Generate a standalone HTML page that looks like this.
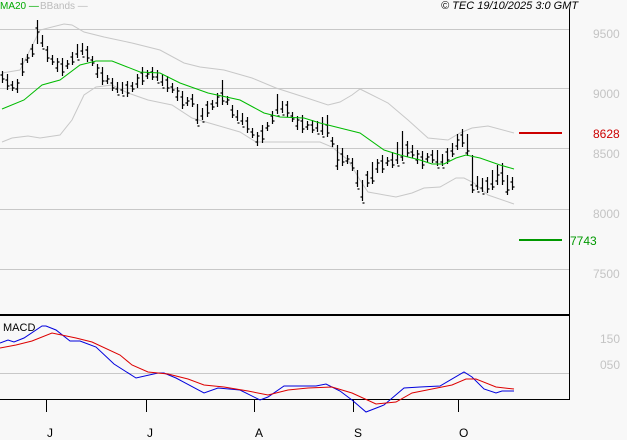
<!DOCTYPE html>
<html><head><meta charset="utf-8"><style>
html,body{margin:0;padding:0;background:#f8f8f8;width:627px;height:440px;overflow:hidden}
svg{display:block}
text{font-family:"Liberation Sans",sans-serif}
</style></head><body>
<svg width="627" height="440" viewBox="0 0 627 440" xmlns="http://www.w3.org/2000/svg">
<rect width="627" height="440" fill="#f8f8f8"/>
<g stroke="#c8c8c8" stroke-width="1">
<line x1="0" y1="29.5" x2="569" y2="29.5"/>
<line x1="0" y1="88.5" x2="569" y2="88.5"/>
<line x1="0" y1="148.5" x2="569" y2="148.5"/>
<line x1="0" y1="209.5" x2="569" y2="209.5"/>
<line x1="0" y1="269.5" x2="569" y2="269.5"/>
<line x1="0" y1="373.5" x2="569" y2="373.5"/>
</g>
<g fill="#c4c4c4" font-size="12">
<text x="593" y="38">9500</text>
<text x="593" y="98">9000</text>
<text x="593" y="158">8500</text>
<text x="593" y="218">8000</text>
<text x="593" y="278">7500</text>
<text x="600" y="343">150</text>
<text x="600" y="369">050</text>
</g>
<polyline fill="none" stroke="#c8c8c8" stroke-width="1" points="2,73 20,70 40,30 64,24 72,25 84,32 104,37 132,43 160,50 184,63 200,67 224,70 252,78 276,88 304,97 328,105 340,102 352,95 360,89 368,93 388,103 408,120 428,138 448,140 460,133 472,128 488,126 514,133"/>
<polyline fill="none" stroke="#c8c8c8" stroke-width="1" points="2,142 12,138 28,136 40,138 60,135 72,120 84,95 96,87 112,85 128,93 148,100 172,105 192,118 216,125 240,132 256,142 280,142 320,142 332,147 348,160 360,180 368,192 396,197 412,193 424,188 440,187 456,178 464,178 474,183 488,195 514,204"/>
<path stroke="#000" stroke-width="1.2" fill="none" d="
M2.5 71v12m-2-8h2m0 4h2
M7.5 74v16m-2-10h2m0 6h2
M12.5 81v10m-2-6h2m0 3h2
M17.5 79v14m-2-4h2m0-6h2
M22.5 58v18m-2-12h2m0 8h2
M27.5 54v9m-2-3h2m0-2h2
M32.5 44v13m-2-8h2m0 5h2
M37.5 20v24m-2-16h2m0 4h2
M42.5 35v12m-2-4h2m0 6h2
M47.5 46v16m-2-12h2m0 8h2
M52.5 55v10m-2-6h2m0 3h2
M57.5 58v14m-2-4h2m0-6h2
M62.5 58v18m-2-12h2m0 8h2
M67.5 60v9m-2-3h2m0-2h2
M72.5 52v13m-2-8h2m0 5h2
M77.5 44v14m-2-4h2m0 6h2
M82.5 43v12m-2-4h2m0 6h2
M87.5 46v16m-2-12h2m0 8h2
M92.5 56v10m-2-6h2m0 3h2
M97.5 64v14m-2-4h2m0-6h2
M102.5 67v18m-2-12h2m0 8h2
M107.5 75v9m-2-3h2m0-2h2
M112.5 78v13m-2-8h2m0 5h2
M117.5 82v11m-2-4h2m0 6h2
M122.5 82v12m-2-4h2m0 6h2
M127.5 81v16m-2-12h2m0 8h2
M132.5 82v10m-2-6h2m0 3h2
M137.5 74v14m-2-4h2m0-6h2
M142.5 67v18m-2-12h2m0 8h2
M147.5 70v9m-2-3h2m0-2h2
M152.5 67v13m-2-8h2m0 5h2
M157.5 70v11m-2-4h2m0 6h2
M162.5 74v12m-2-4h2m0 6h2
M167.5 76v16m-2-12h2m0 8h2
M172.5 83v10m-2-6h2m0 3h2
M177.5 87v14m-2-4h2m0-6h2
M182.5 91v18m-2-12h2m0 8h2
M187.5 97v9m-2-3h2m0-2h2
M192.5 94v13m-2-8h2m0 5h2
M197.5 104v20m-2-4h2m0 6h2
M202.5 108v12m-2-4h2m0 6h2
M207.5 101v16m-2-12h2m0 8h2
M212.5 100v10m-2-6h2m0 3h2
M217.5 93v14m-2-4h2m0-6h2
M222.5 80v25m-2-12h2m0 8h2
M227.5 96v9m-2-3h2m0-2h2
M232.5 105v13m-2-8h2m0 5h2
M237.5 110v11m-2-4h2m0 6h2
M242.5 113v12m-2-4h2m0 6h2
M247.5 117v16m-2-12h2m0 8h2
M252.5 128v10m-2-6h2m0 3h2
M257.5 132v14m-2-4h2m0-6h2
M262.5 125v18m-2-12h2m0 8h2
M267.5 122v9m-2-3h2m0-2h2
M272.5 111v13m-2-8h2m0 5h2
M277.5 94v20m-2-4h2m0 6h2
M282.5 101v12m-2-4h2m0 6h2
M287.5 101v16m-2-12h2m0 8h2
M292.5 112v10m-2-6h2m0 3h2
M297.5 116v14m-2-4h2m0-6h2
M302.5 115v18m-2-12h2m0 8h2
M307.5 121v9m-2-3h2m0-2h2
M312.5 120v13m-2-8h2m0 5h2
M317.5 121v11m-2-4h2m0 6h2
M322.5 117v18m-2-4h2m0 6h2
M327.5 115v22m-2-12h2m0 8h2
M332.5 137v10m-2-6h2m0 3h2
M337.5 145v25m-2-4h2m0-6h2
M342.5 148v18m-2-12h2m0 8h2
M347.5 155v9m-2-3h2m0-2h2
M352.5 158v13m-2-8h2m0 5h2
M357.5 170v17m-2-4h2m0 6h2
M362.5 180v21m-2-4h2m0 6h2
M367.5 171v16m-2-12h2m0 8h2
M372.5 162v22m-2-6h2m0 3h2
M377.5 159v14m-2-4h2m0-6h2
M382.5 155v18m-2-12h2m0 8h2
M387.5 157v9m-2-3h2m0-2h2
M392.5 152v16m-2-8h2m0 5h2
M397.5 142v22m-2-4h2m0 6h2
M402.5 131v30m-2-4h2m0 6h2
M407.5 141v16m-2-12h2m0 8h2
M412.5 145v13m-2-6h2m0 3h2
M417.5 150v14m-2-4h2m0-6h2
M422.5 151v18m-2-12h2m0 8h2
M427.5 153v9m-2-3h2m0-2h2
M432.5 150v13m-2-8h2m0 5h2
M437.5 150v16m-2-4h2m0 6h2
M442.5 154v12m-2-4h2m0 6h2
M447.5 148v16m-2-12h2m0 8h2
M452.5 143v14m-2-6h2m0 3h2
M457.5 134v16m-2-4h2m0-6h2
M462.5 129v18m-2-12h2m0 8h2
M467.5 134v22m-2-3h2m0-2h2
M472.5 155v38m-2-8h2m0 5h2
M477.5 176v14m-2-4h2m0 6h2
M482.5 178v14m-2-4h2m0 6h2
M487.5 177v16m-2-12h2m0 8h2
M492.5 170v20m-2-6h2m0 3h2
M497.5 165v20m-2-4h2m0-6h2
M502.5 163v22m-2-12h2m0 8h2
M507.5 175v20m-2-3h2m0-2h2
M512.5 177v13m-2-8h2m0 5h2"/>
<polyline fill="none" stroke="#00bb00" stroke-width="1" points="2,109 24,100 42,85 60,80 80,65 96,61 112,61 140,72 160,73 180,83 208,93 240,100 264,113 280,117 304,118 320,123 336,127 360,133 384,150 400,155 420,160 432,164 444,164 456,158 466,155 480,158 500,165 514,169"/>
<line x1="519" y1="133" x2="562" y2="133" stroke="#cc0000" stroke-width="2"/>
<text x="593" y="138" fill="#cc0000" font-size="12">8628</text>
<line x1="519" y1="240" x2="562" y2="240" stroke="#009900" stroke-width="2"/>
<text x="570" y="245" fill="#009900" font-size="12">7743</text>
<line x1="0" y1="315" x2="569" y2="315" stroke="#000" stroke-width="2"/>
<line x1="569.5" y1="9" x2="569.5" y2="399" stroke="#000" stroke-width="1"/>
<line x1="0" y1="399.5" x2="570" y2="399.5" stroke="#000" stroke-width="1"/>
<g stroke="#000" stroke-width="1">
<line x1="46.5" y1="399" x2="46.5" y2="412"/>
<line x1="146.5" y1="399" x2="146.5" y2="412"/>
<line x1="254.5" y1="399" x2="254.5" y2="412"/>
<line x1="353.5" y1="399" x2="353.5" y2="412"/>
<line x1="458.5" y1="399" x2="458.5" y2="412"/>
</g>
<g font-size="12" fill="#000">
<text x="47" y="437">J</text><text x="147" y="437">J</text><text x="255" y="437">A</text><text x="354" y="437">S</text><text x="459" y="437">O</text>
</g>
<text x="3" y="331" font-size="11" fill="#000">MACD</text>
<polyline fill="none" stroke="#0000dd" stroke-width="1" points="0,343 8,340 14,342 24,338 42,326 46,326 56,330 70,341 80,341 96,347 114,364 136,378 158,373 164,373 176,378 204,393 218,388 240,390 260,400 268,397 284,386 316,386 326,384 340,391 352,400 366,412 384,405 404,388 420,387 440,386 464,372 472,377 484,389 496,393 502,391 514,391"/>
<polyline fill="none" stroke="#dd0000" stroke-width="1" points="0,348 16,345 32,341 52,333 76,338 92,342 120,355 132,365 148,372 168,374 188,379 204,385 224,387 248,391 268,395 288,390 308,388 332,387 352,393 376,404 396,402 412,393 432,389 452,385 466,379 476,379 496,387 514,389"/>
<text x="0" y="9" font-size="10" fill="#00aa00">MA20 —</text>
<text x="40" y="9" font-size="10" fill="#bbbbbb">BBands —</text>
<text x="441" y="9" font-size="11" font-style="italic" fill="#000">© TEC 19/10/2025 3:0 GMT</text>
</svg>
</body></html>
